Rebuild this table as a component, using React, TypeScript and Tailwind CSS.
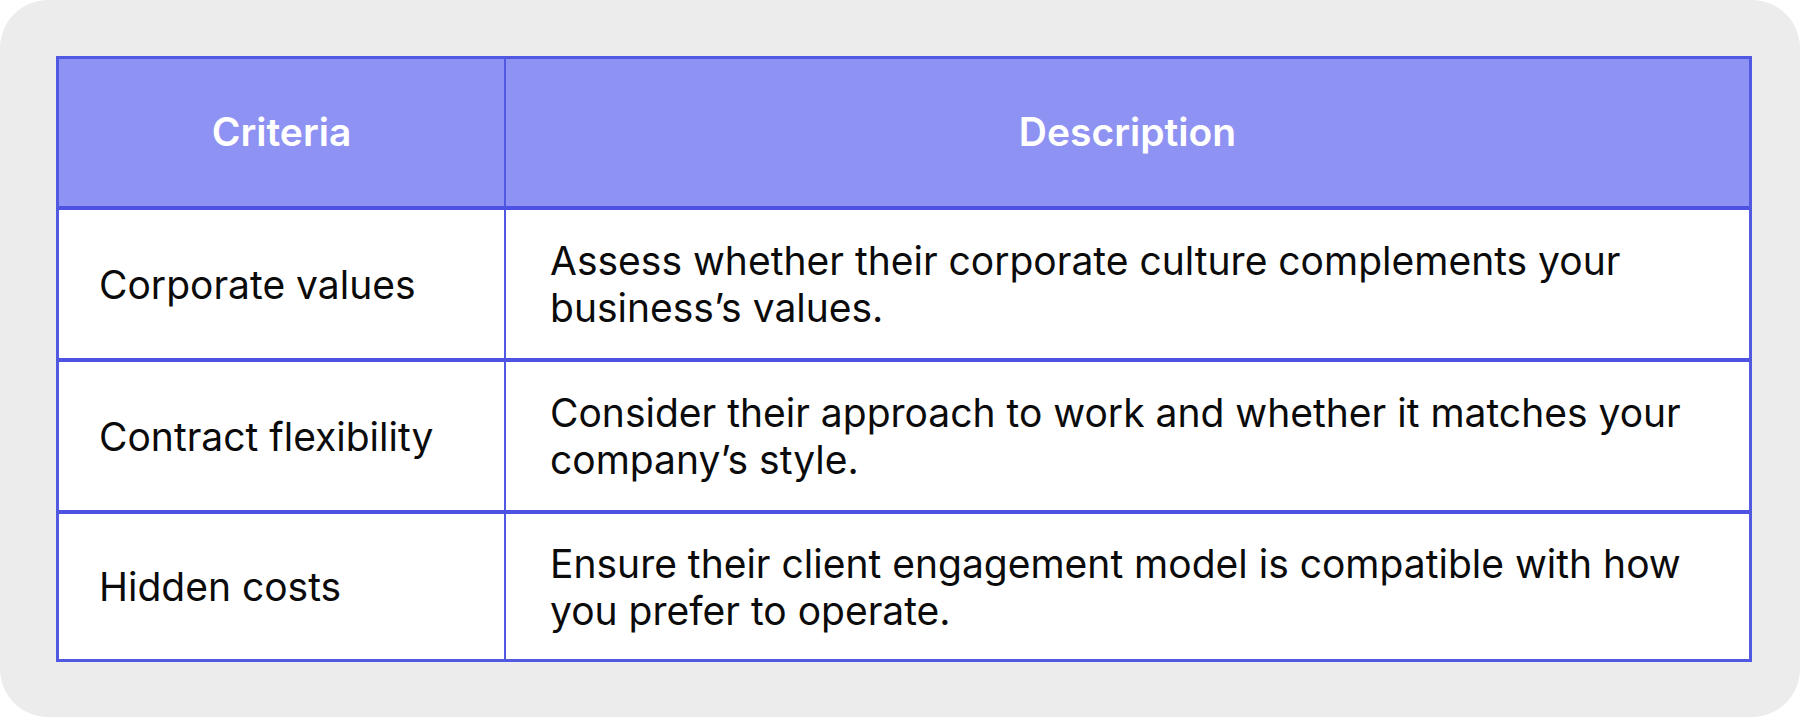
const rows = [
  {
    criteria: "Corporate values",
    description: "Assess whether their corporate culture complements your business’s values.",
  },
  {
    criteria: "Contract flexibility",
    description: "Consider their approach to work and whether it matches your company’s style.",
  },
  {
    criteria: "Hidden costs",
    description: "Ensure their client engagement model is compatible with how you prefer to operate.",
  },
];

export default function App() {
  return (
    <div className="h-[717px] w-[1800px] bg-white">
      <div
        className="h-full w-full rounded-[48px] bg-[#ececec] pl-[56px] pr-[48px] pt-[56px]"
        style={{ fontFamily: "Inter, 'Noto Sans', sans-serif" }}
      >
        <div className="border-[3px] border-[#5158e2] bg-white">
          {/* header */}
          <div className="grid h-[151px] grid-cols-[447px_1fr] border-b-4 border-[#4c52e3] bg-[#8e92f2] text-[39px] font-semibold text-white">
            <div className="flex items-center justify-center border-r-2 border-[#5158e2]">Criteria</div>
            <div className="flex items-center justify-center">Description</div>
          </div>
          {rows.map((row, i) => (
            <div
              key={row.criteria}
              className={
                "grid grid-cols-[447px_1fr] text-[39px] leading-[47px] text-[#0b0b0b] " +
                (i < rows.length - 1 ? "h-[152px] border-b-4 border-[#4c52e3]" : "h-[145px]")
              }
            >
              <div className="flex items-center border-r-2 border-[#5158e2] pl-[40px]">{row.criteria}</div>
              <div className="flex items-center pl-[44px] pr-[36px]">{row.description}</div>
            </div>
          ))}
        </div>
      </div>
    </div>
  );
}
